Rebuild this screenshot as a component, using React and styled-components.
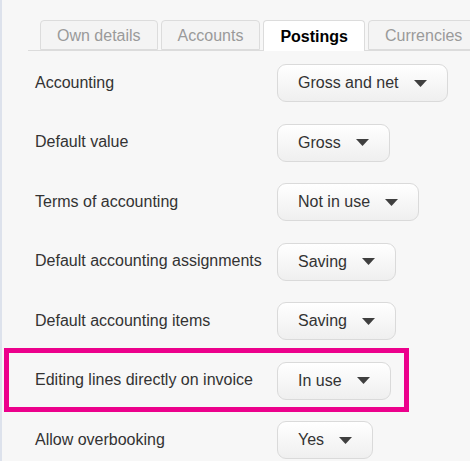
import React from "react";
import styled, { createGlobalStyle } from "styled-components";

const Global = createGlobalStyle`
  html, body { margin: 0; padding: 0; background: #f7f7f7; }
  body {
    font-family: "Liberation Sans", Arial, sans-serif;
    font-size: 16px;
    color: #333;
    overflow: hidden;
  }
`;

const Page = styled.div`
  min-height: 461px;
  width: 470px;
  box-sizing: border-box;
  border-left: 2px solid #dde2ec;
  background: #f7f7f7;
  padding-top: 20px;
`;

const TabBar = styled.div`
  display: flex;
  gap: 3px;
  margin-left: 26px;
  padding-left: 12px;
  border-bottom: 1px solid #dcdcdc;
  height: 30px;
  white-space: nowrap;
`;

const Tab = styled.div`
  flex: none;
  box-sizing: border-box;
  height: ${(p) => (p.$active ? "31px" : "30px")};
  padding: 2px ${(p) => p.$pad || 16}px 0;
  display: flex;
  align-items: center;
  border: 1px solid #dcdcdc;
  border-bottom: ${(p) => (p.$active ? "none" : "1px solid #dcdcdc")};
  border-radius: 4px 4px 0 0;
  background: ${(p) => (p.$active ? "#fff" : "#f4f4f4")};
  color: ${(p) => (p.$active ? "#000" : "#9a9a9a")};
  font-weight: ${(p) => (p.$active ? "bold" : "normal")};
  font-size: 16px;
`;

const Form = styled.div`
  display: grid;
  grid-template-columns: 242px auto;
  justify-content: start;
  align-items: center;
  row-gap: 21.5px;
  padding: 13px 0 0 33px;
`;

const Label = styled.div`
  font-size: 16px;
  color: #333;
  white-space: nowrap;
  position: relative;
  padding-bottom: 1px;
`;

const Highlight = styled.div`
  position: absolute;
  left: -31px;
  top: calc(50% - 33px);
  width: 405px;
  height: 64px;
  box-sizing: border-box;
  border: 5px solid #ec008c;
  pointer-events: none;
`;

const Select = styled.div`
  justify-self: start;
  box-sizing: border-box;
  height: 38px;
  display: inline-flex;
  align-items: center;
  gap: 15px;
  padding: 0 20px 0 20px;
  border: 1px solid #dadada;
  border-radius: 9px;
  background: linear-gradient(#ffffff, #efefef);
  color: #333;
  font-size: 16px;
  white-space: nowrap;
`;

const Arrow = () => (
  <svg width="13" height="7" viewBox="0 0 13 7" style={{ display: "block" }}>
    <path d="M0 0 H13 L6.5 7 Z" fill="#3f3f3f" />
  </svg>
);

const rows = [
  ["Accounting", "Gross and net"],
  ["Default value", "Gross"],
  ["Terms of accounting", "Not in use"],
  ["Default accounting assignments", "Saving"],
  ["Default accounting items", "Saving"],
  ["Editing lines directly on invoice", "In use", true],
  ["Allow overbooking", "Yes"],
];

export default function App() {
  return (
    <Page>
      <Global />
      <TabBar>
        <Tab $pad={16}>Own details</Tab>
        <Tab $pad={16}>Accounts</Tab>
        <Tab $active $pad={16}>Postings</Tab>
        <Tab $pad={16}>Currencies</Tab>
      </TabBar>
      <Form>
        {rows.map(([label, value, hl]) => (
          <React.Fragment key={label}>
            <Label>
              {hl && <Highlight />}
              {label}
            </Label>
            <Select>
              {value}
              <Arrow />
            </Select>
          </React.Fragment>
        ))}
      </Form>
    </Page>
  );
}
